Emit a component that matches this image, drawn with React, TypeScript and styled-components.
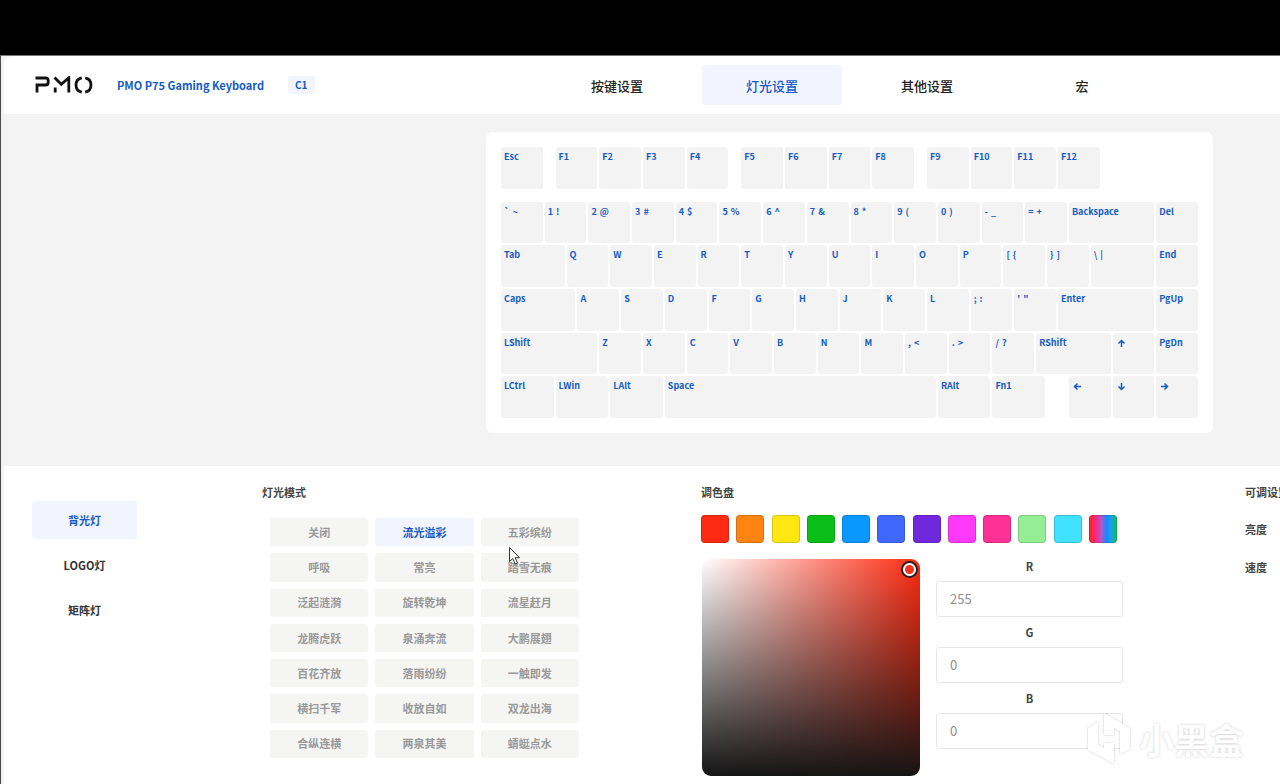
import React, { useState } from 'react';
import styled, { createGlobalStyle, css } from 'styled-components';

const blue = '#145cc4';
const lavender = '#f2f4ff';

const GlobalStyle = createGlobalStyle`
  *, *::before, *::after { box-sizing: border-box; }
  body {
    margin: 0;
    background: #fff;
    color: #444;
    font-family: "Noto Sans CJK SC", "Noto Sans", sans-serif;
    font-weight: 700;
  }
  button, input { font: inherit; }
  h2 { margin: 0; }
`;

const Screen = styled.div`
  position: relative;
  display: flex;
  flex-direction: column;
  min-height: 100vh;
  overflow: hidden;
`;

const TopBand = styled.div`
  flex: none;
  height: 55px;
  background: #000;
`;

const AppWindow = styled.div`
  flex: 1;
  display: flex;
  flex-direction: column;
  min-width: 1695px;
  padding-left: 3px;
  background: #f4f2f3;
  border-left: 1px solid #4a4a4a;
  border-top: 1px solid #777;
`;

const Header = styled.header`
  display: flex;
  align-items: center;
  height: 58px;
  padding: 0 31px;
  background: #fff;
  border-top-left-radius: 8px;
`;

const Brand = styled.div`
  flex: 1;
  display: flex;
  align-items: center;
`;

const Logo = styled.svg`
  width: 58px;
  height: 18px;
`;

const ProductName = styled.span`
  margin-left: 24px;
  font-size: 11px;
  line-height: 18px;
  color: ${blue};
`;

const Badge = styled.span`
  margin-left: 24px;
  padding: 0 7px;
  border-radius: 3px;
  background: ${lavender};
  color: ${blue};
  font-size: 10px;
  line-height: 18px;
`;

const TabBar = styled.nav`
  display: flex;
  gap: 15px;
`;

const HeaderSpacer = styled.div`
  flex: 1;
`;

const activeTint = css`
  background: ${lavender};
  color: ${blue};
`;

const Tab = styled.button<{ $active?: boolean }>`
  width: 140px;
  height: 40px;
  padding: 0;
  border: 0;
  border-radius: 3px;
  background: transparent;
  color: #222;
  font-size: 13px;
  font-weight: 500;
  ${p => p.$active && activeTint}
`;

const Stage = styled.section`
  display: flex;
  justify-content: center;
  padding: 18px 0 33px;
  background: #f3f3f3;
`;

const KeyboardCase = styled.div`
  width: 727px;
  padding: 14px;
  border-radius: 7px;
  background: #fff;
`;

const KeyGrid = styled.div`
  display: grid;
  grid-template-columns: repeat(64, 1fr);
  grid-template-rows: repeat(25, 1fr);
  aspect-ratio: 64 / 25;
`;

const Key = styled.button<{ $col: number; $row: number; $span: number }>`
  grid-column: ${p => p.$col} / span ${p => p.$span};
  grid-row: ${p => p.$row} / span 4;
  display: flex;
  align-items: flex-start;
  gap: 3px;
  min-width: 0;
  min-height: 0;
  margin: 1px;
  padding: 2px 3px;
  border: 0;
  border-radius: 3px;
  background: #f3f3f3;
  color: ${blue};
  font-size: 9px;
  line-height: 16px;
`;

const Controls = styled.section`
  flex: 1;
  display: flex;
  align-items: flex-start;
  padding: 18px 0 8px 28px;
  background: #fff;
`;

const ZoneList = styled.nav`
  display: flex;
  flex-direction: column;
  gap: 7px;
  width: 105px;
  margin: 17px 125px 0 0;
`;

const Zone = styled.button<{ $active?: boolean }>`
  height: 38px;
  padding: 0;
  border: 0;
  border-radius: 3px;
  background: transparent;
  color: #333;
  font-size: 11px;
  ${p => p.$active && activeTint}
`;

const Heading = styled.h2`
  font-size: 11px;
  line-height: 16px;
`;

const ModePanel = styled.div`
  width: 439px;
`;

const ModeGrid = styled.div`
  display: grid;
  grid-template-columns: repeat(3, 1fr);
  grid-auto-rows: 1fr;
  gap: 7px;
  width: 309px;
  height: 240px;
  margin: 18px 0 0 8px;
`;

const Mode = styled.button<{ $active?: boolean }>`
  padding: 0 0 1px;
  border: 0;
  border-radius: 3px;
  background: #f5f5f4;
  color: #999;
  font-size: 11px;
  line-height: 16px;
  ${p => p.$active && activeTint}
`;

const ColorPanel = styled.div`
  width: 422px;
  margin-right: 122px;
`;

const Swatches = styled.div`
  display: flex;
  justify-content: space-between;
  width: 416px;
  margin: 15px 0 16px;
`;

const Swatch = styled.button<{ $fill: string }>`
  width: 28px;
  height: 28px;
  padding: 0;
  border: 1px solid rgba(0, 0, 0, 0.15);
  border-radius: 4px;
  background: ${p => p.$fill};
  background-origin: border-box;
`;

const PickerRow = styled.div`
  display: flex;
  gap: 16px;
  padding-left: 1px;
`;

const Saturation = styled.div`
  position: relative;
  flex: none;
  width: 218px;
  height: 217px;
  border-radius: 9px;
  background:
    linear-gradient(to top, #151515, rgba(21, 21, 21, 0)),
    linear-gradient(to right, #fff, #ff2a10);
`;

const Handle = styled.span`
  position: absolute;
  top: 4px;
  right: 4px;
  width: 13px;
  height: 13px;
  border: 2px solid #fff;
  border-radius: 50%;
  box-shadow: 0 0 0 2px #222;
`;

const Channels = styled.div`
  flex: 1;
  display: flex;
  flex-direction: column;
`;

const Channel = styled.div`
  display: flex;
  flex-direction: column;
  height: 66px;
  text-align: center;
`;

const ChannelLabel = styled.label`
  padding-bottom: 8px;
  font-size: 11px;
  line-height: 14px;
`;

const ChannelInput = styled.input`
  width: 100%;
  height: 36px;
  padding: 0 13px 2px;
  border: 1px solid #e6e6e6;
  border-radius: 3px;
  background: #fff;
  color: #8f8f8f;
  font-size: 13px;
  font-weight: 400;
  outline: none;
`;

const Adjustments = styled.div`
  flex: 1;
  display: flex;
  flex-direction: column;
  gap: 20px;
  white-space: nowrap;
`;

const AdjustLabel = styled.span`
  font-size: 11px;
  line-height: 18px;
`;

const Watermark = styled.div`
  position: absolute;
  right: 36px;
  bottom: 18px;
  display: flex;
  align-items: center;
  gap: 8px;
  color: #fff;
  font-size: 35px;
  line-height: 54px;
  text-shadow: 0 0 3px rgba(0, 0, 0, 0.2);
  pointer-events: none;

  svg {
    width: 44px;
    height: 54px;
    filter: drop-shadow(0 0 1px rgba(0, 0, 0, 0.22));
  }
`;

const Pointer = styled.svg`
  position: absolute;
  left: 508px;
  top: 546px;
  width: 13px;
  height: 20px;
  pointer-events: none;
`;

type KeyDef = [label: string, width: number];

/* Widths are in quarter key units; an empty label leaves a gap. */
const rows: { top: number; keys: KeyDef[] }[] = [
  {
    top: 1,
    keys: [['Esc', 4], ['', 1], ['F1', 4], ['F2', 4], ['F3', 4], ['F4', 4], ['', 1], ['F5', 4], ['F6', 4],
      ['F7', 4], ['F8', 4], ['', 1], ['F9', 4], ['F10', 4], ['F11', 4], ['F12', 4]],
  },
  {
    top: 6,
    keys: [['` ~', 4], ['1 !', 4], ['2 @', 4], ['3 #', 4], ['4 $', 4], ['5 %', 4], ['6 ^', 4], ['7 &', 4],
      ['8 *', 4], ['9 (', 4], ['0 )', 4], ['- _', 4], ['= +', 4], ['Backspace', 8], ['Del', 4]],
  },
  {
    top: 10,
    keys: [['Tab', 6], ['Q', 4], ['W', 4], ['E', 4], ['R', 4], ['T', 4], ['Y', 4], ['U', 4], ['I', 4],
      ['O', 4], ['P', 4], ['[ {', 4], ['} ]', 4], ['\\ |', 6], ['End', 4]],
  },
  {
    top: 14,
    keys: [['Caps', 7], ['A', 4], ['S', 4], ['D', 4], ['F', 4], ['G', 4], ['H', 4], ['J', 4], ['K', 4],
      ['L', 4], ['; :', 4], ['\' "', 4], ['Enter', 9], ['PgUp', 4]],
  },
  {
    top: 18,
    keys: [['LShift', 9], ['Z', 4], ['X', 4], ['C', 4], ['V', 4], ['B', 4], ['N', 4], ['M', 4], [', <', 4],
      ['. >', 4], ['/ ?', 4], ['RShift', 7], ['↑', 4], ['PgDn', 4]],
  },
  {
    top: 22,
    keys: [['LCtrl', 5], ['LWin', 5], ['LAlt', 5], ['Space', 25], ['RAlt', 5], ['Fn1', 5], ['', 2],
      ['←', 4], ['↓', 4], ['→', 4]],
  },
];

const placedKeys = rows.flatMap(({ top, keys }) => {
  let col = 1;
  return keys.map(([label, span]) => {
    const key = { label, span, col, top };
    col += span;
    return key;
  });
}).filter(key => key.label !== '');

const arrows: Record<string, string> = {
  '↑': 'M4.5 8V1.5M1.5 4.5l3-3 3 3',
  '↓': 'M4.5 1v6.5M1.5 4.5l3 3 3-3',
  '←': 'M8 4.5H1.5M4.5 1.5l-3 3 3 3',
  '→': 'M1 4.5h6.5M4.5 1.5l3 3-3 3',
};

const ArrowIcon = styled.svg`
  width: 9px;
  height: 9px;
  margin: 4px 1px;
`;

const tabs = ['按键设置', '灯光设置', '其他设置', '宏'];
const zones = ['背光灯', 'LOGO灯', '矩阵灯'];
const modes = [
  '关闭', '流光溢彩', '五彩缤纷',
  '呼吸', '常亮', '踏雪无痕',
  '泛起涟漪', '旋转乾坤', '流星赶月',
  '龙腾虎跃', '泉涌奔流', '大鹏展翅',
  '百花齐放', '落雨纷纷', '一触即发',
  '横扫千军', '收放自如', '双龙出海',
  '合纵连横', '两泉其美', '蜻蜓点水',
];
const swatches = [
  '#ff2a12', '#ff8410', '#ffe712', '#0abf18', '#0a98ff', '#4068ff',
  '#7028dc', '#ff38fa', '#ff3096', '#94ee94', '#40e2ff',
  'linear-gradient(to right, #ff2020 0%, #f52c90 28%, #a060d0 45%, #1888ff 62%, #18a0f0 78%, #08c848 100%)',
];

export default function App() {
  const [tab, setTab] = useState('灯光设置');
  const [zone, setZone] = useState('背光灯');
  const [mode, setMode] = useState('流光溢彩');
  const [rgb, setRgb] = useState<Record<string, string>>({ R: '255', G: '0', B: '0' });

  return (
    <Screen>
      <GlobalStyle />
      <TopBand />
      <AppWindow>
        <Header>
          <Brand>
            <Logo viewBox="0 0 58 18" fill="none" stroke="#111" strokeWidth="2.8" aria-label="PMO">
              <path d="M0.500 2H10.500Q13.200 2 13.200 4.500V6.500Q13.200 9 10.500 9H2V16.500" />
              <path d="M19.500 1.500L26.300 8.300L33.800 1.800V16.500M20.200 11.500V16.500" />
              <path d="M46.800 1.800Q41 3 41 9T46.800 16.200M50.200 1.800Q56 3 56 9T50.200 16.200" />
            </Logo>
            <ProductName>PMO P75 Gaming Keyboard</ProductName>
            <Badge>C1</Badge>
          </Brand>
          <TabBar>
            {tabs.map(t => (
              <Tab key={t} $active={t === tab} onClick={() => setTab(t)}>{t}</Tab>
            ))}
          </TabBar>
          <HeaderSpacer />
        </Header>

        <Stage>
          <KeyboardCase>
            <KeyGrid>
              {placedKeys.map(k => (
                <Key key={k.label} $col={k.col} $row={k.top} $span={k.span} aria-label={k.label}>
                  {arrows[k.label] ? (
                    <ArrowIcon viewBox="0 0 9 9" fill="none" stroke="currentColor" strokeWidth="1.5">
                      <path d={arrows[k.label]} />
                    </ArrowIcon>
                  ) : k.label.split(' ').map(legend => <span key={legend}>{legend}</span>)}
                </Key>
              ))}
            </KeyGrid>
          </KeyboardCase>
        </Stage>

        <Controls>
          <ZoneList>
            {zones.map(z => (
              <Zone key={z} $active={z === zone} onClick={() => setZone(z)}>{z}</Zone>
            ))}
          </ZoneList>

          <ModePanel>
            <Heading>灯光模式</Heading>
            <ModeGrid>
              {modes.map(m => (
                <Mode key={m} $active={m === mode} onClick={() => setMode(m)}>{m}</Mode>
              ))}
            </ModeGrid>
          </ModePanel>

          <ColorPanel>
            <Heading>调色盘</Heading>
            <Swatches>
              {swatches.map(s => <Swatch key={s} $fill={s} aria-label="颜色" />)}
            </Swatches>
            <PickerRow>
              <Saturation><Handle /></Saturation>
              <Channels>
                {['R', 'G', 'B'].map(c => (
                  <Channel key={c}>
                    <ChannelLabel htmlFor={`channel-${c}`}>{c}</ChannelLabel>
                    <ChannelInput
                      id={`channel-${c}`}
                      value={rgb[c]}
                      onChange={e => setRgb({ ...rgb, [c]: e.target.value })}
                    />
                  </Channel>
                ))}
              </Channels>
            </PickerRow>
          </ColorPanel>

          <Adjustments>
            <Heading>可调设置</Heading>
            <AdjustLabel>亮度</AdjustLabel>
            <AdjustLabel>速度</AdjustLabel>
          </Adjustments>
        </Controls>
      </AppWindow>

      <Watermark>
        <svg viewBox="0 0 44 54" fill="#fff">
          <path d="M1 16L11 10V33L17 36V31H27V52L1 38Z" />
          <path d="M17 1L43 16V37L33 42V19L27 16V23H17Z" />
        </svg>
        <span>小黑盒</span>
      </Watermark>

      <Pointer viewBox="0 0 13 20" fill="#fff" stroke="#333" strokeWidth="1">
        <path d="M1.500 1.500V15.500L4.800 12.500L7.200 18L9.500 17L7.200 11.700H11.500Z" />
      </Pointer>
    </Screen>
  );
}
